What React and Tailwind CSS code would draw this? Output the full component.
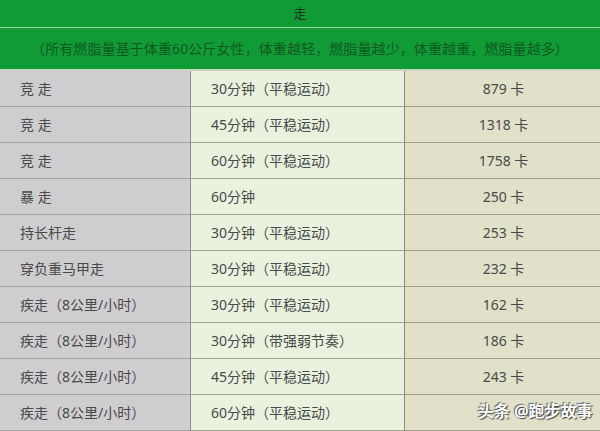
import React from "react";

const rows = [
  ["竞 走", "30分钟（平稳运动）", "879 卡"],
  ["竞 走", "45分钟（平稳运动）", "1318 卡"],
  ["竞 走", "60分钟（平稳运动）", "1758 卡"],
  ["暴 走", "60分钟", "250 卡"],
  ["持长杆走", "30分钟（平稳运动）", "253 卡"],
  ["穿负重马甲走", "30分钟（平稳运动）", "232 卡"],
  ["疾走（8公里/小时）", "30分钟（平稳运动）", "162 卡"],
  ["疾走（8公里/小时）", "30分钟（带强弱节奏）", "186 卡"],
  ["疾走（8公里/小时）", "45分钟（平稳运动）", "243 卡"],
  ["疾走（8公里/小时）", "60分钟（平稳运动）", ""],
];

export default function App() {
  return (
    <div
      className="relative w-[600px] h-[431px] overflow-hidden bg-[#e1e0c9] text-[#4a4a4a] text-[14px]"
      style={{ fontFamily: '"Noto Sans", "Noto Sans CJK SC", sans-serif' }}
    >
      <div className="h-[27px] bg-[#119b37] flex items-center justify-center text-[#173a1c] text-[13px]">
        走
      </div>
      <div className="h-[1px] bg-[#8fd89a]" />
      <div className="h-[41px] bg-[#119b37] flex items-center justify-center text-[#0c5a20] text-[14px] tracking-[0.1px]">
        （所有燃脂量基于体重60公斤女性，体重越轻，燃脂量越少，体重越重，燃脂量越多）
      </div>
      <div className="h-[2px] bg-[#c9d6c2]" />
      {rows.map((r, i) => (
        <div key={i} className="grid grid-cols-[191px_214px_1fr] h-[36px]">
          <div className="bg-[#cfcdd0] border-r border-r-[#8e8e86] border-b border-b-[#a3a3a3] flex items-center pl-[20px]">
            {r[0]}
          </div>
          <div className="bg-[#e9f2df] border-r border-r-[#8a8c7c] border-b border-b-[#a0a592] flex items-center pl-[20px]">
            {r[1]}
          </div>
          <div className="bg-[#e1e0c9] border-b border-b-[#a0a08c] flex items-center justify-center pl-[2px]">
            {r[2]}
          </div>
        </div>
      ))}
      <div
        className="absolute left-[478px] top-[401px] text-white text-[16px] font-bold leading-[20px] whitespace-nowrap"
        style={{ textShadow: "1px 1px 1px #444, -1px -1px 1px #666" }}
      >
        头条 @跑步故事
      </div>
    </div>
  );
}
